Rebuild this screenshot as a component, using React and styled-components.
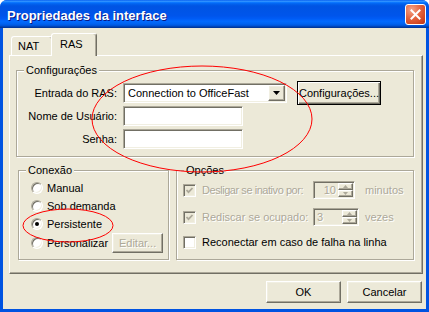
import React from 'react';
import styled, { createGlobalStyle, css } from 'styled-components';

const GlobalStyle = createGlobalStyle`
  html, body { margin: 0; padding: 0; background: #fff; }
  body {
    font-family: "Liberation Sans", Arial, sans-serif;
    font-size: 11px;
    color: #000;
  }
`;

const FACE = '#ECE9D8';
const SHADOW = '#ACA899';
const DARK = '#716F64';
const LIGHT = '#F1EFE2';

const raised = css`
  border: 1px solid;
  border-color: #fff ${DARK} ${DARK} #fff;
  box-shadow: inset -1px -1px 0 ${SHADOW}, inset 1px 1px 0 ${LIGHT};
`;

const sunken = css`
  border: 1px solid;
  border-color: ${SHADOW} #fff #fff ${SHADOW};
  box-shadow: inset 1px 1px 0 ${DARK}, inset -1px -1px 0 ${LIGHT};
`;

const Window = styled.div`
  position: relative;
  width: 429px;
  height: 312px;
  display: flex;
  flex-direction: column;
  background: #0053e1;
  border-radius: 7px 7px 0 0;
  overflow: hidden;
  box-sizing: border-box;
`;

const TitleBar = styled.div`
  height: 28px;
  flex: none;
  display: flex;
  align-items: center;
  padding: 0 3px 0 7px;
  box-sizing: border-box;
  background: linear-gradient(
    #0058ee 0%, #3593ff 4%, #288eff 6%, #127dff 8%, #036ffc 10%,
    #0262ee 14%, #0057e5 20%, #0054e3 24%, #0055eb 56%, #005bf5 66%,
    #026afe 76%, #0062ef 86%, #0052d6 92%, #0040ab 96%, #003092 100%
  );
`;

const Title = styled.span`
  padding-top: 2px;
  font-family: "Liberation Sans", Arial, sans-serif;
  font-weight: bold;
  font-size: 13px;
  color: #fff;
  text-shadow: 1px 1px 0 #0a1883;
`;

const CloseButton = styled.div`
  margin-left: auto;
  width: 21px;
  height: 21px;
  box-sizing: border-box;
  border: 1px solid #fff;
  border-radius: 3px;
  background: radial-gradient(circle at 30% 25%, #f4a489 0%, #e4643f 45%, #cf4420 80%, #b83313 100%);
  display: flex;
  align-items: center;
  justify-content: center;
`;

const Body = styled.div`
  flex: 1;
  margin: 0 3px 3px;
  padding: 5px 3px 0 6px;
  background: ${FACE};
  display: flex;
  flex-direction: column;
`;

const TabStrip = styled.div`
  display: flex;
  align-items: flex-end;
  height: 22px;
  padding-left: 2px;
  position: relative;
  z-index: 1;
`;

const Tab = styled.div`
  box-sizing: border-box;
  height: ${p => (p.$active ? 23 : 19)}px;
  width: ${p => (p.$active ? 46 : 42)}px;
  margin-left: ${p => (p.$active ? -2 : 0)}px;
  margin-bottom: ${p => (p.$active ? -1 : 0)}px;
  padding: ${p => (p.$active ? '4px 0 0 8px' : '3px 0 0 6px')};
  background: ${FACE};
  border: 1px solid #fff;
  border-bottom: none;
  border-right-color: ${DARK};
  border-radius: 3px 3px 0 0;
  box-shadow: inset -1px 0 0 ${SHADOW};
  font-size: 11px;
  line-height: 13px;
  position: relative;
  z-index: ${p => (p.$active ? 2 : 1)};
`;

const TabPanel = styled.div`
  height: 219px;
  box-sizing: border-box;
  border: 1px solid;
  border-color: #fff ${DARK} ${DARK} #fff;
  box-shadow: inset -1px -1px 0 ${SHADOW};
  padding: 8px 8px 0 6px;
  display: flex;
  flex-direction: column;
`;

const Group = styled.fieldset`
  margin: 0;
  padding: 0;
  min-width: 0;
  box-sizing: border-box;
  border: 1px solid ${SHADOW};
  box-shadow: 1px 1px 0 #fff, inset 1px 1px 0 #fff;
  width: ${p => (p.$width ? `${p.$width}px` : 'auto')};
`;

const Legend = styled.legend`
  margin-left: 7px;
  padding: 0 2px;
  font-size: 11px;
  line-height: 13px;
  background: ${FACE};
`;

const FormGrid = styled.div`
  display: grid;
  grid-template-columns: 100px 164px 84px;
  grid-template-rows: repeat(3, 20px);
  column-gap: 6px;
  row-gap: 3px;
  align-items: center;
  padding: 6px 0 7px;
`;

const FieldLabel = styled.span`
  text-align: right;
  white-space: nowrap;
`;

const TextField = styled.div`
  ${sunken};
  box-sizing: border-box;
  width: 120px;
  height: 20px;
  background: #fff;
`;

const Combo = styled.div`
  ${sunken};
  box-sizing: border-box;
  height: 20px;
  padding: 1px;
  background: #fff;
  display: flex;
  align-items: center;
`;

const ComboText = styled.span`
  flex: 1;
  padding-left: 3px;
  white-space: nowrap;
`;

const ComboButton = styled.div`
  ${raised};
  box-sizing: border-box;
  width: 17px;
  height: 16px;
  background: ${FACE};
  display: flex;
  align-items: center;
  justify-content: center;
`;

const PushButton = styled.div`
  box-sizing: border-box;
  width: ${p => p.$width}px;
  height: ${p => p.$height || 22}px;
  background: ${FACE};
  display: flex;
  align-items: center;
  justify-content: center;
  white-space: nowrap;
  color: ${p => (p.$disabled ? SHADOW : '#000')};
  text-shadow: ${p => (p.$disabled ? '1px 1px 0 #fff' : 'none')};
  ${p =>
    p.$default
      ? css`
          border: 1px solid #000;
          box-shadow: inset 1px 1px 0 #fff, inset -1px -1px 0 ${DARK}, inset -2px -2px 0 ${SHADOW};
        `
      : raised};
`;

const ConfigButton = styled(PushButton)`
  justify-self: start;
  margin-left: 4px;
`;

const GroupRow = styled.div`
  display: flex;
  align-items: stretch;
  gap: 7px;
  margin-top: 7px;
  padding-left: 2px;
`;

const RadioList = styled.div`
  display: flex;
  flex-direction: column;
  padding: 2px 5px 5px 12px;
`;

const RadioRow = styled.div`
  display: flex;
  align-items: center;
  gap: 4px;
  min-height: 18px;
`;

const RadioCircle = styled.span`
  box-sizing: border-box;
  width: 12px;
  height: 12px;
  border-radius: 50%;
  border: 1px solid;
  border-color: ${SHADOW} #fff #fff ${SHADOW};
  box-shadow: inset 1px 1px 0 ${DARK}, inset -1px -1px 0 ${LIGHT};
  background: #fff;
  display: flex;
  align-items: center;
  justify-content: center;
  flex: none;

  &::after {
    content: '';
    width: 4px;
    height: 4px;
    border-radius: 50%;
    background: ${p => (p.$checked ? '#000' : 'transparent')};
  }
`;

const EditButton = styled(PushButton)`
  margin-left: auto;
`;

const OptionsGrid = styled.div`
  display: grid;
  grid-template-columns: 13px 105px auto 1fr;
  grid-template-rows: 18px 18px 14px;
  column-gap: 6px;
  row-gap: 9px;
  align-items: center;
  padding: 4px 6px 10px 6px;
`;

const Text = styled.span`
  white-space: nowrap;
  color: ${p => (p.$disabled ? SHADOW : '#000')};
  text-shadow: ${p => (p.$disabled ? '1px 1px 0 #fff' : 'none')};
  letter-spacing: ${p => (p.$tight ? '-0.45px' : 'normal')};
  grid-column: ${p => p.$span || 'auto'};
`;

const CheckBox = styled.span`
  ${sunken};
  box-sizing: border-box;
  width: 13px;
  height: 13px;
  background: ${p => (p.$disabled ? FACE : '#fff')};
  display: flex;
  align-items: center;
  justify-content: center;
`;

const Spinner = styled.div`
  ${sunken};
  box-sizing: border-box;
  width: ${p => p.$width}px;
  height: 18px;
  padding: 1px;
  background: ${FACE};
  display: flex;
  align-items: stretch;
`;

const SpinValue = styled.span`
  flex: 1;
  display: flex;
  align-items: center;
  justify-content: ${p => (p.$right ? 'flex-end' : 'flex-start')};
  padding: 0 2px;
  color: ${SHADOW};
  text-shadow: 1px 1px 0 #fff;
`;

const SpinButtons = styled.div`
  display: flex;
  flex-direction: column;
  width: 15px;
`;

const SpinArrow = styled.div`
  ${raised};
  box-sizing: border-box;
  flex: 1;
  background: ${FACE};
  display: flex;
  align-items: center;
  justify-content: center;
`;

const ButtonRow = styled.div`
  display: flex;
  justify-content: flex-end;
  gap: 6px;
  margin-top: 7px;
  padding-right: 1px;
`;

const Annotations = styled.svg`
  position: absolute;
  left: 0;
  top: 0;
  pointer-events: none;
  z-index: 10;
`;

const Check = ({ color }) => (
  <svg width="9" height="9" viewBox="0 0 9 9">
    <polyline points="1.5,4 3.5,6.2 7.5,2" fill="none" stroke={color} strokeWidth="1.8" />
  </svg>
);

const Arrow = ({ up, color = '#000', w = 7, h = 4 }) => (
  <svg width={w} height={h} viewBox={`0 0 ${w} ${h}`}>
    <polygon
      points={up ? `0,${h} ${w / 2},0 ${w},${h}` : `0,0 ${w},0 ${w / 2},${h}`}
      fill={color}
    />
  </svg>
);

const SpinBox = ({ value, width, right }) => (
  <Spinner $width={width}>
    <SpinValue $right={right}>{value}</SpinValue>
    <SpinButtons>
      <SpinArrow><Arrow up color={SHADOW} w={5} h={3} /></SpinArrow>
      <SpinArrow><Arrow color={SHADOW} w={5} h={3} /></SpinArrow>
    </SpinButtons>
  </Spinner>
);

const radios = [
  { label: 'Manual' },
  { label: 'Sob demanda' },
  { label: 'Persistente', checked: true },
];

export default function App() {
  return (
    <>
      <GlobalStyle />
      <Window>
        <TitleBar>
          <Title>Propriedades da interface</Title>
          <CloseButton>
            <svg width="11" height="11" viewBox="0 0 11 11">
              <path d="M1.5 1.5 L9.5 9.5 M9.5 1.5 L1.5 9.5" stroke="#fff" strokeWidth="2" strokeLinecap="square" />
            </svg>
          </CloseButton>
        </TitleBar>
        <Body>
          <TabStrip>
            <Tab>NAT</Tab>
            <Tab $active>RAS</Tab>
          </TabStrip>
          <TabPanel>
            <Group>
              <Legend>Configurações</Legend>
              <FormGrid>
                <FieldLabel>Entrada do RAS:</FieldLabel>
                <Combo>
                  <ComboText>Connection to OfficeFast</ComboText>
                  <ComboButton><Arrow /></ComboButton>
                </Combo>
                <ConfigButton $width={84} $height={24} $default>Configurações...</ConfigButton>
                <FieldLabel>Nome de Usuário:</FieldLabel>
                <TextField />
                <span />
                <FieldLabel>Senha:</FieldLabel>
                <TextField />
                <span />
              </FormGrid>
            </Group>
            <GroupRow>
              <Group $width={151}>
                <Legend>Conexão</Legend>
                <RadioList>
                  {radios.map(r => (
                    <RadioRow key={r.label}>
                      <RadioCircle $checked={r.checked} />
                      <span>{r.label}</span>
                    </RadioRow>
                  ))}
                  <RadioRow>
                    <RadioCircle />
                    <span>Personalizar</span>
                    <EditButton $width={55} $height={20} $disabled>Editar...</EditButton>
                  </RadioRow>
                </RadioList>
              </Group>
              <Group $width={238}>
                <Legend>Opções</Legend>
                <OptionsGrid>
                  <CheckBox $disabled><Check color={SHADOW} /></CheckBox>
                  <Text $disabled $tight>Desligar se inativo por:</Text>
                  <SpinBox value="10" width={42} right />
                  <Text $disabled>minutos</Text>
                  <CheckBox $disabled><Check color={SHADOW} /></CheckBox>
                  <Text $disabled>Rediscar se ocupado:</Text>
                  <SpinBox value="3" width={46} />
                  <Text $disabled>vezes</Text>
                  <CheckBox />
                  <Text $span="2 / -1">Reconectar em caso de falha na linha</Text>
                </OptionsGrid>
              </Group>
            </GroupRow>
          </TabPanel>
          <ButtonRow>
            <PushButton $width={75}>OK</PushButton>
            <PushButton $width={75}>Cancelar</PushButton>
          </ButtonRow>
        </Body>
        <Annotations width="429" height="312" viewBox="0 0 429 312">
          <ellipse cx="202" cy="119" rx="110" ry="53" fill="none" stroke="#ff0000" strokeWidth="1" />
          <ellipse cx="68" cy="225.5" rx="45" ry="16.5" fill="none" stroke="#ff0000" strokeWidth="1" />
        </Annotations>
      </Window>
    </>
  );
}
